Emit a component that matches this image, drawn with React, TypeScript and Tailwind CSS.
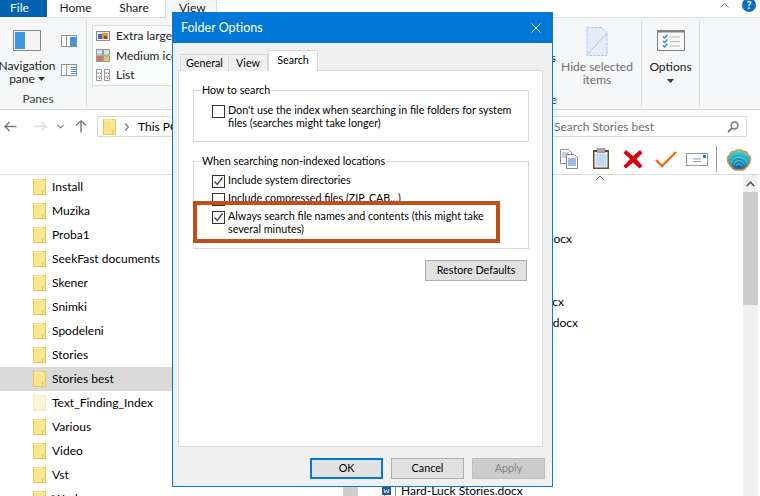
import React from 'react';

const FOLDERS = ['Install', 'Muzika', 'Proba1', 'SeekFast documents', 'Skener', 'Snimki', 'Spodeleni', 'Stories', 'Stories best', 'Text_Finding_Index', 'Various', 'Video', 'Vst', 'Work'];

const FILES = [
  { name: 'Bad Luck.docx', cls: 'w-[100px]' },
  { name: 'Best Friends.docx', cls: 'w-[110px]' },
  { name: 'Collected Best Short Stories.docx', cls: 'w-[171px]' },
  { name: 'Dreams.docx', cls: 'w-[90px]' },
  { name: 'Early Stories.docx', cls: 'w-[110px]' },
  { name: 'Favourite Stories of Old Times.docx', cls: 'w-[163px]' },
  { name: 'Funny Stories from the Village.docx', cls: 'w-[177px]' },
  { name: 'Gold.docx', cls: 'w-[80px]' },
  { name: 'Good Luck.docx', cls: 'w-[100px]' },
  { name: 'Grandfather.docx', cls: 'w-[110px]' },
  { name: 'Great Escape.docx', cls: 'w-[110px]' },
  { name: 'Green Hills.docx', cls: 'w-[100px]' },
  { name: 'Hard Times.docx', cls: 'w-[100px]' },
  { name: 'Harbour.docx', cls: 'w-[90px]' },
  { name: 'Hard-Luck Stories.docx', cls: 'w-auto' },
];

function Folder({ faded }: { faded?: boolean }) {
  return (
    <svg width="13" height="16" viewBox="0 0 13 16" className={faded ? 'opacity-40' : ''}>
      <rect x="0.5" y="0.5" width="12" height="15" fill="#fce48f" stroke="#eec857" />
      <path d="M1 1h8v10h3" fill="none" stroke="#fdf0bd" />
      <path d="M9.5 15v-4h3" fill="none" stroke="#eec857" />
    </svg>
  );
}

function Check({ checked }: { checked?: boolean }) {
  return (
    <span className="w-[13px] h-[13px] border border-[#333] bg-white shrink-0 mt-[2px] flex items-center justify-center">
      {checked && (
        <svg width="11" height="11" viewBox="0 0 11 11">
          <path d="M1.5 5.5 4.200 8.500 9.500 1.500" fill="none" stroke="#444" strokeWidth="1.300" />
        </svg>
      )}
    </span>
  );
}

function Btn({ children, cls }: { children: React.ReactNode; cls: string }) {
  return <button className={`w-[73px] h-[21px] flex items-center justify-center ${cls}`}>{children}</button>;
}

function Caret() {
  return <svg width="7" height="4" viewBox="0 0 7 4"><path d="M0 0h7L3.500 4z" fill="#333" /></svg>;
}

function PaneIcon({ lines }: { lines?: boolean }) {
  return (
    <svg width="16" height="12" viewBox="0 0 16 12">
      <rect x="0.5" y="0.5" width="15" height="11" fill="#fff" stroke="#8f8f8f" />
      <path d="M5.5 1v10" stroke="#8f8f8f" />
      <rect x="9" y="2" width="6" height="9" fill={lines ? '#fff' : '#3d95e0'} />
      {lines && <path d="M10 3.500h5M10 5.500h5M10 7.500h5M10 9.500h5" stroke="#3d95e0" />}
    </svg>
  );
}

function ToolbarIcons() {
  return (
    <div className="flex items-center h-full">
      <svg width="20" height="22" viewBox="0 0 20 22" className="mr-[13px]">
        <path d="M1.500 1.500h8l3 3v11h-11z" fill="#fff" stroke="#8a8f99" />
        <path d="M3 5h7M3 7h7M3 9h7" stroke="#7d9bd0" />
        <path d="M7.500 6.500h8l3 3v11h-11z" fill="#fff" stroke="#7f8794" />
        <path d="M9 11h8M9 13h8M9 15h8M9 17h8" stroke="#3f70c4" />
      </svg>
      <svg width="18" height="22" viewBox="0 0 18 22" className="mr-[13px]">
        <rect x="1" y="2" width="16" height="19" fill="#6b4a2c" />
        <rect x="2.500" y="4" width="13" height="15.500" fill="#e4effa" />
        <path d="M4 7h10M4 9h10M4 11h10M4 13h10M4 15h10M4 17h10" stroke="#a7c4e6" />
        <rect x="5" y="0.500" width="8" height="4" fill="#a9a9a9" stroke="#666" strokeWidth="0.500" />
      </svg>
      <svg width="20" height="20" viewBox="0 0 20 20" className="mr-[12px]">
        <path d="M3 1l7 6 7-6 2.500 3-6 6 6 7-3 2.500-6.500-6-7 6L.5 17l6.500-7-6.500-6z" fill="#d9000d" />
      </svg>
      <svg width="22" height="18" viewBox="0 0 22 18" className="mr-[9px]">
        <path d="M1 10l6 6L21 2" fill="none" stroke="#ee6a14" strokeWidth="2.400" />
      </svg>
      <svg width="22" height="13" viewBox="0 0 22 13" className="mr-[8px]">
        <rect x="0.500" y="0.500" width="21" height="12" fill="#fff" stroke="#8e9aa5" />
        <rect x="17" y="2" width="3" height="3" fill="#2e86d8" />
        <path d="M7 6h8M7 8.500h8" stroke="#8e9aa5" />
      </svg>
      <div className="w-px h-[26px] bg-[#8f9aa0] mr-[9px]" />
      <svg width="26" height="23" viewBox="0 0 26 23">
        <defs>
          <radialGradient id="shell" cx="50%" cy="85%" r="85%">
            <stop offset="0%" stopColor="#14609f" />
            <stop offset="40%" stopColor="#1b8fb4" />
            <stop offset="75%" stopColor="#35c0c6" />
            <stop offset="100%" stopColor="#6adcd8" />
          </radialGradient>
        </defs>
        <path
          d="M4 17.500C.5 13.500.5 9 3.500 7 4.500 4 7 3 9 3.500c1-2.500 7-2.500 8 0 2-.5 4.500.5 5.500 3.500 3 2 3 6.500-.5 10.500-1.500 2-3 4-5 4.500H9c-2-.5-3.500-2.500-5-4.500z"
          fill="url(#shell)"
          stroke="#ee8a35"
          strokeWidth="1.300"
        />
        <path d="M5 15a8.500 8.500 0 0 1 16 0M7.500 16.500a5.800 5.800 0 0 1 11 0M10 18a3.200 3.200 0 0 1 6 0" fill="none" stroke="#8be6e2" strokeWidth=".9" opacity=".75" />
      </svg>
    </div>
  );
}

export default function App() {
  return (
    <div className="relative w-[760px] h-[496px] overflow-hidden bg-white text-[12px] text-black font-['Lato','Open_Sans',sans-serif] flex flex-col">
      {/* ── Menu tabs ───────────────────────────────────────── */}
      <div className="h-[18px] flex shrink-0 items-stretch">
        <div className="w-[47px] h-[17px] bg-[#0063b1] text-white flex items-center justify-center pr-[8px] pb-[2px]">File</div>
        <div className="w-[70px] flex items-center justify-center border-b border-[#dadbdc] text-[#222] pr-[13px] pb-[2px]">Home</div>
        <div className="w-[48px] flex items-center justify-center border-b border-[#dadbdc] text-[#222] pr-[14px] pb-[2px]">Share</div>
        <div className="w-[52px] flex items-center pl-[13px] pb-[2px] bg-[#f5f6f7] border-x border-[#dadbdc] text-[#222]">View</div>
        <div className="flex-1 flex items-start justify-end border-b border-[#dadbdc] pr-[4px] gap-[13px]">
          <svg width="9" height="5" viewBox="0 0 9 5" className="mt-[3px]"><path d="M.5 4.500l4-4 4 4" fill="none" stroke="#888" /></svg>
          <span className="w-[14px] h-[14px] -mt-[2px] rounded-full bg-[#0d6fc4] text-white text-[11px] font-bold flex items-center justify-center">?</span>
        </div>
      </div>

      {/* ── Ribbon ──────────────────────────────────────────── */}
      <div className="h-[92px] shrink-0 bg-[#f5f6f7] border-b border-[#dadbdc] flex items-stretch text-[#222]">
        <div className="w-[87px] my-[2px] border-r border-[#dadbdc] flex flex-col">
          <div className="flex flex-1">
            <div className="w-[54px] flex flex-col items-center pt-[10px] leading-[13px]">
              <svg width="28" height="21" viewBox="0 0 28 21" className="mb-[8px]">
                <rect x="0.500" y="0.500" width="27" height="20" fill="#f4f4f4" stroke="#878787" />
                <rect x="2" y="2" width="10" height="17" fill="#3d95e0" />
              </svg>
              <span>Navigation</span>
              <span className="flex items-center gap-[3px]">pane <Caret /></span>
            </div>
            <div className="ml-[7px] pt-[15px] flex flex-col gap-[17px]">
              <PaneIcon />
              <PaneIcon lines />
            </div>
          </div>
          <div className="text-center text-[#444] h-[24px] pt-[7px] leading-[13px] pr-[10px]">Panes</div>
        </div>

        <div className="flex-1 flex">
          <div className="ml-[5px] mt-[7px] w-[300px] h-[61px] bg-[#fbfcfc] border border-[#dcdcdc] flex flex-col pl-[3px]">
            <div className="h-[20px] flex items-center gap-[6px]">
              <svg width="14" height="10" viewBox="0 0 14 10"><rect x=".5" y=".5" width="13" height="9" fill="#eee" stroke="#8a8a8a" /><rect x="2" y="3" width="5" height="5" fill="#4f63c0" /><rect x="6" y="2" width="6" height="6" fill="#c9a22f" /><rect x="8" y="5" width="3" height="3" fill="#b33a2a" /></svg>
              <span>Extra large icons</span>
            </div>
            <div className="h-[20px] flex items-center gap-[6px]">
              <svg width="14" height="13" viewBox="0 0 14 13"><rect x=".5" y=".5" width="6" height="5.500" fill="#cfe0f0" stroke="#999" /><rect x="7.500" y=".5" width="6" height="5.500" fill="#d8e8c8" stroke="#999" /><rect x=".5" y="7" width="6" height="5.500" fill="#d9705a" stroke="#999" /><rect x="7.500" y="7" width="6" height="5.500" fill="#e8c860" stroke="#999" /></svg>
              <span>Medium icons</span>
            </div>
            <div className="h-[20px] flex items-center gap-[6px]">
              <svg width="14" height="12" viewBox="0 0 14 12"><path d="M.5.5h5v11h-5zM8.500.5h5v11h-5zM.5 4h5M.5 8h5M8.500 4h5M8.500 8h5" fill="#fff" stroke="#999" /><path d="M3 9.500h1M11 9.500h1" stroke="#c33" /></svg>
              <span>List</span>
            </div>
          </div>

          <div className="flex-1 flex flex-col my-[2px] border-r border-[#dadbdc]">
            <div className="flex-1 flex justify-end">
              <div className="pt-[29px] pr-[6px]">Hidden items</div>
              <div className="w-[70px] mr-[9px] flex flex-col items-center text-[#6d6d6d] leading-[13px] pt-[7px] whitespace-nowrap">
                <svg width="22" height="29" viewBox="0 0 22 29" className="mb-[4px]">
                  <path d="M1 .5h15l5 5v23H1z" fill="#e3ecf9" stroke="#b6c4da" strokeDasharray="3 1" />
                  <path d="M1 28L21 6" stroke="#b6c4da" />
                </svg>
                <span>Hide selected</span>
                <span>items</span>
              </div>
            </div>
            <div className="h-[24px] pt-[7px] leading-[13px] text-right pr-[84px] text-[#444]">Show/hide</div>
          </div>

          <div className="w-[58px] my-[2px] border-r border-[#dadbdc] flex flex-col items-center pt-[10px] leading-[13px]">
            <svg width="28" height="21" viewBox="0 0 28 21" className="mb-[9px]">
              <rect x="0.500" y="0.500" width="27" height="20" fill="#f7f7f7" stroke="#808080" />
              <rect x="1" y="1" width="26" height="1.500" fill="#808080" />
              <path d="M6 6.500l1.500 1.500 3-3M6 11l1.500 1.500 3-3M6 15.500L7.500 17l3-3" fill="none" stroke="#2d8fdc" strokeWidth="1.500" />
              <path d="M13 7h10M13 11.500h10M13 16h10" stroke="#bbb" />
            </svg>
            <span>Options</span>
            <span className="mt-[6px]"><Caret /></span>
          </div>
          <div className="w-[60px]" />
        </div>
      </div>

      {/* ── Address bar ─────────────────────────────────────── */}
      <div className="h-[31px] shrink-0 flex items-start pt-[6px]">
        <div className="w-[97px] h-[21px] flex items-center shrink-0">
          <svg width="13" height="11" viewBox="0 0 13 11" className="ml-[4px]"><path d="M12.500 5.500H1M5.500 1 1 5.500 5.500 10" fill="none" stroke="#7d7d7d" strokeWidth="1.500" /></svg>
          <svg width="13" height="11" viewBox="0 0 13 11" className="ml-[17px]"><path d="M.5 5.500H12M7.500 1 12 5.500 7.500 10" fill="none" stroke="#dcdcdc" strokeWidth="1.500" /></svg>
          <svg width="7" height="5" viewBox="0 0 7 5" className="ml-[10px]"><path d="M.5 1l3 3 3-3" fill="none" stroke="#888" strokeWidth="1.200" /></svg>
          <svg width="12" height="13" viewBox="0 0 12 13" className="ml-[11px]"><path d="M6 12.500V1M1 5.500 6 1l5 4.500" fill="none" stroke="#7d7d7d" strokeWidth="1.500" /></svg>
        </div>
        <div className="w-[449px] h-[21px] border border-[#d9d9d9] flex items-center pl-[5px] shrink-0">
          <Folder />
          <svg width="5" height="8" viewBox="0 0 5 8" className="ml-[8px]"><path d="M1 .5 4.500 4 1 7.500" fill="none" stroke="#777" strokeWidth="1.200" /></svg>
          <span className="ml-[9px]">This PC</span>
        </div>
        <div className="ml-[4px] w-[197px] h-[21px] border border-[#d9d9d9] flex items-center justify-between pl-[3px] pr-[7px]">
          <span className="text-[#6d6d6d]">Search Stories best</span>
          <svg width="12" height="12" viewBox="0 0 12 12"><circle cx="7.500" cy="4.500" r="3.500" fill="none" stroke="#777" strokeWidth="1.400" /><path d="M5 7 1 11" stroke="#777" strokeWidth="1.800" /></svg>
        </div>
      </div>

      {/* ── Toolbar ─────────────────────────────────────────── */}
      <div className="h-[34px] shrink-0 border-b border-[#dadbdc] flex flex-col items-end pr-[8px] pt-[3px]">
        <ToolbarIcons />
      </div>

      {/* ── Content ─────────────────────────────────────────── */}
      <div className="relative flex-1 flex min-h-0">
        <div className="w-[343px] shrink-0">
          {FOLDERS.map((f) => (
            <div key={f} className={`h-[24px] flex items-center pl-[33px] gap-[6px] ${f === 'Stories best' ? 'bg-[#d9d9d9]' : ''}`}>
              <Folder faded={f === 'Text_Finding_Index'} />
              <span>{f}</span>
            </div>
          ))}
        </div>
        <div className="w-[15px] shrink-0 bg-[#cdcdcd]" />
        <div className="flex-1 pt-[11px] pl-[24px] min-w-0">
          {FILES.map((f) => (
            <div key={f.name} className="h-[21px] flex items-center gap-[5px]">
              <svg width="14" height="16" viewBox="0 0 14 16">
                <path d="M2.500.5h8l3 3v12h-11z" fill="#fff" stroke="#8a8f99" />
                <rect x="0" y="4" width="9" height="8" fill="#2b5797" />
                <path d="M2 6l1 4 1.500-3L6 10l1-4" fill="none" stroke="#fff" strokeWidth=".8" />
              </svg>
              <span className={`${f.cls} whitespace-nowrap flex justify-end`}>{f.name}</span>
            </div>
          ))}
        </div>
        <div className="w-[15px] shrink-0 bg-[#f0f0f0] flex flex-col">
          <div className="h-[17px] flex items-center justify-center">
            <svg width="9" height="6" viewBox="0 0 9 6"><path d="M.8 5 4.500 1.300 8.200 5" fill="none" stroke="#505050" strokeWidth="1.600" /></svg>
          </div>
          <div className="h-[113px] bg-[#cdcdcd]" />
        </div>
        <div className="w-[2px] shrink-0" />
        {/* sort marker sitting on the list header */}
        <svg width="8" height="5" viewBox="0 0 8 5" className="absolute left-[596px] top-[0px]"><path d="M.5 4.500 4 1l3.500 3.500" fill="none" stroke="#777" /></svg>
      </div>

      {/* ── Folder Options dialog ───────────────────────────── */}
      <div className="absolute left-[172px] top-[12px] w-[381px] h-[475px] border border-[#0a78d7] bg-[#f0f0f0] flex flex-col text-[10.75px]">
        <div className="h-[30px] bg-[#0078d7] text-white flex items-center justify-between pl-[8px] pr-[11px] text-[12.5px]">
          <span>Folder Options</span>
          <svg width="10" height="10" viewBox="0 0 10 10"><path d="M.5.5l9 9M9.500.5l-9 9" stroke="#fff" /></svg>
        </div>
        <div className="pl-[5px] pr-[9px] pt-[7px] flex-1 flex flex-col">
          <div className="h-[21px] flex items-end pl-[2px] relative z-10 -mb-px">
            <div className="h-[17px] w-[49px] bg-[#f0f0f0] border border-b-0 border-[#d9d9d9] flex items-center justify-center">General</div>
            <div className="h-[17px] w-[40px] -ml-px bg-[#f0f0f0] border border-b-0 border-[#d9d9d9] flex items-center justify-center">View</div>
            <div className="h-[21px] w-[50px] bg-white border border-b-0 border-[#d9d9d9] flex items-center justify-center pb-[2px]">Search</div>
          </div>
          <div className="relative h-[377px] bg-white border border-[#d9d9d9] pl-[14px]">
            <fieldset className="mt-[11px] w-[336px] h-[60px] border border-[#d9d9d9]">
              <legend className="ml-[7px] px-px leading-[16px]">How to search</legend>
              <div className="flex gap-[3px] ml-[18px] pt-[5px] leading-[13px]">
                <Check />
                <span className="w-[290px]">Don't use the index when searching in file folders for system files (searches might take longer)</span>
              </div>
            </fieldset>
            <fieldset className="mt-[11px] w-[336px] h-[96px] border border-[#d9d9d9]">
              <legend className="ml-[7px] px-px leading-[16px]">When searching non-indexed locations</legend>
              <div className="ml-[18px] pt-[4px] flex flex-col gap-[3px] leading-[13px]">
                <div className="flex gap-[3px]"><Check checked /><span>Include system directories</span></div>
                <div className="flex gap-[3px]"><Check /><span>Include compressed files (ZIP, CAB...)</span></div>
                <div className="flex gap-[3px]"><Check checked /><span className="w-[290px]">Always search file names and contents (this might take several minutes)</span></div>
              </div>
            </fieldset>
            <div className="flex justify-end pr-[15px] mt-[11px]">
              <button className="w-[102px] h-[21px] bg-[#e1e1e1] border border-[#adadad] flex items-center justify-center">Restore Defaults</button>
            </div>
            {/* annotation drawn over the dialog */}
            <div className="absolute left-[14px] top-[130px] w-[307px] h-[42px] border-[4px] border-[#c0501b]" />
          </div>
          <div className="flex justify-end gap-[8px] pt-[11px] -mr-[2px]">
            <Btn cls="bg-[#e1e1e1] border-2 border-[#0078d7]">OK</Btn>
            <Btn cls="bg-[#e1e1e1] border border-[#adadad]">Cancel</Btn>
            <Btn cls="bg-[#cccccc] border border-[#bfbfbf] text-[#838383]">Apply</Btn>
          </div>
        </div>
      </div>
    </div>
  );
}
